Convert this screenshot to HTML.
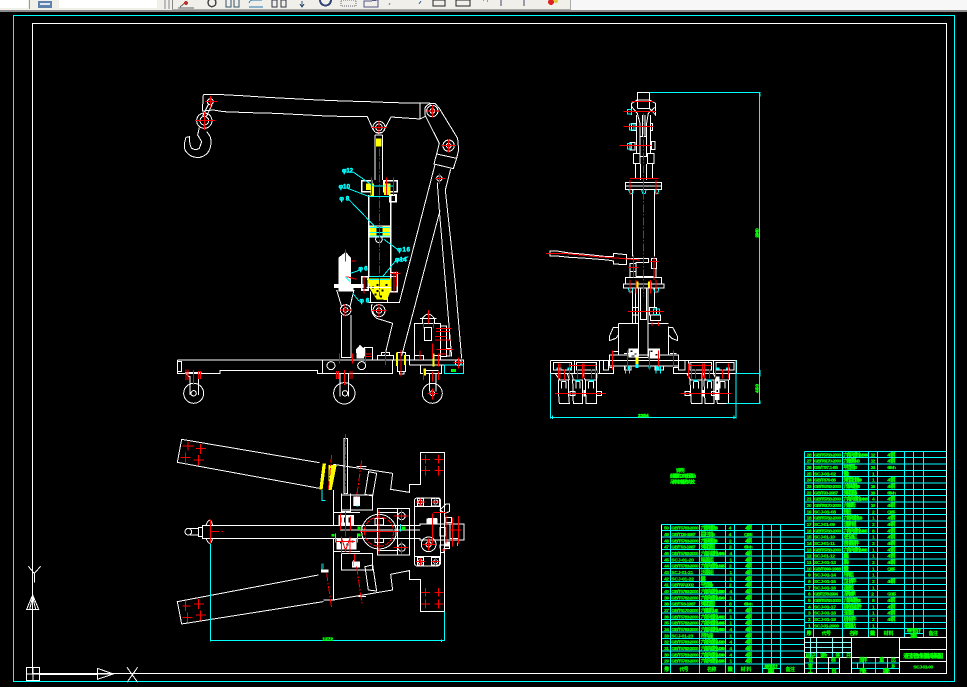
<!DOCTYPE html>
<html><head><meta charset="utf-8"><style>
html,body{margin:0;padding:0;background:#000;width:967px;height:687px;overflow:hidden}
svg{display:block;position:absolute;left:0;top:0}
svg *{shape-rendering:crispEdges}
.k{fill:none;stroke-width:3}
.w{stroke:#fff}.c{stroke:#0ff}.r{stroke:#f00}.y{stroke:#ff0}
.wf{fill:#fff;stroke:none}.yf{fill:#ff0;stroke:none}.cf{fill:#0ff;stroke:none}.gf{fill:#0f0;stroke:none}.rf{fill:#f00;stroke:none}
.d{stroke-dasharray:24 5 5 5}
text{font-family:"Liberation Sans","Noto Sans CJK SC",sans-serif;font-weight:bold;fill:#0f0;stroke:#0f0;stroke-width:.6;font-size:15px}
text.cy{fill:#0ff;stroke:#0ff;stroke-width:1.5;font-size:19px}
</style></head><body>
<svg width="967" height="687" viewBox="0 0 967 687" xmlns="http://www.w3.org/2000/svg">
<rect width="967" height="687" fill="#000"/>
<!-- toolbar -->
<rect width="967" height="10" fill="#f0efe9"/>
<rect y="10" width="967" height="2" fill="#8a8a8a"/>
<rect x="0" y="0" width="28" height="8" fill="#fff"/>
<rect x="29" y="0" width="1" height="9" fill="#999"/>
<rect x="38" y="1" width="14" height="7" fill="#5f82ad"/>
<rect x="40" y="3" width="10" height="2" fill="#dfe8f2"/>
<rect x="59" y="0" width="98" height="8" fill="#fff"/>
<rect x="164" y="0" width="2" height="9" fill="#bbb"/><rect x="168" y="0" width="2" height="9" fill="#bbb"/>
<rect x="172" y="0" width="1" height="9" fill="#888"/>
<rect x="172" y="9" width="398" height="1" fill="#aaa"/>
<rect x="570" y="0" width="1" height="10" fill="#aaa"/>
<rect x="571" y="0" width="396" height="10" fill="#f7f7f7"/>
<g fill="none" stroke="#555">
<path d="M180 7l6-5M178 8h16" stroke="#666"/><circle cx="186" cy="3" r="2" fill="#b33" stroke="none"/>
<path d="M209 0a4 4 0 1 0 6 0" stroke="#444" stroke-width="1.500"/>
<path d="M226 0v7h5V0M234 0v7h5V0" stroke="#356"/>
<path d="M249 3a4 4 0 0 1 4-3h9M249 7h14" stroke="#27a"/>
<rect x="272" y="0" width="5" height="7" stroke="#334"/><rect x="281" y="0" width="5" height="7" stroke="#334"/>
<path d="M302 1v5m-2-2l2 3 2-3" stroke="#357"/>
<path d="M320 0a5.500 5.500 0 0 0 11 0" stroke="#347" stroke-width="2"/>
<rect x="341" y="0" width="15" height="6" stroke="#667" stroke-dasharray="1 1"/>
<path d="M364 7V1h6l8-1v7z" stroke="#558"/>
<path d="M390 3l-1 2M421 1l-2 3" stroke="#47a"/>
<rect x="433" y="0" width="12" height="6" stroke="#222"/><rect x="456" y="0" width="14" height="6" stroke="#222"/>
<path d="M483 0h1m3 1h1M501 0v6M524 0v6" stroke="#446"/>
</g>
<circle cx="551" cy="2" r="3" fill="#d22"/><circle cx="556" cy="1" r="2" fill="#dc3"/>

<!-- frames -->
<path d="M13.500 15.500H954.500V681.500H13.500Z" fill="none" stroke="#0ff"/>
<path d="M32.500 23.500H946.500V673.500H32.500Z" fill="none" stroke="#fff"/>

<!-- UCS icon -->
<g transform="translate(0 550) scale(.3333)" class="k w">
<path d="M85 49L103 70L122 49M103 70V97"/>
<path d="M80 178H116L98 135ZM89 178L98 140M107 178L98 140"/>
<path d="M79 352H119V392H79ZM79 372H119M99 352V392"/>
<path d="M119 372H292" stroke-width="5"/>
<path d="M292 355L340 372L292 388ZM292 372H340" />
<path d="M381 352L413 397M413 352L381 397"/>
</g>

<!-- SIDE VIEW -->
<g transform="translate(160 80) scale(.3333)" class="k">
<g class="w">
<path d="M130 43L168 43L245 47L320 52L398 56L475 60L550 63L625 65L700 68L825 70M780 68V117L693 111L672 150M780 117L798 108"/>
<path d="M130 43L127 93L160 90L190 95L268 98L345 100L423 104L500 108L580 110L622 110L640 150"/>
<circle cx="151" cy="65" r="9"/><path d="M146 72L128 108M156 74L140 108"/>
<circle cx="133" cy="122" r="23"/><circle cx="133" cy="122" r="13"/>
<path d="M118 142L113 165L125 185L118 205Q108 212 95 205Q88 195 88 170L78 172Q70 195 75 210Q90 235 120 232Q150 225 153 190Q155 170 140 155"/>
<circle cx="657" cy="142" r="18"/><circle cx="657" cy="142" r="10"/>
<path d="M795 85Q800 70 825 70L838 85L893 175L896 210L890 235L830 222L838 190L795 105Z"/>
<circle cx="817" cy="93" r="17"/><circle cx="817" cy="93" r="7"/><circle cx="866" cy="197" r="17"/><circle cx="866" cy="197" r="7"/>
<path d="M830 222L822 252L880 266L890 235"/>
<path d="M825 254L718 668H625"/>
<path d="M872 268L856 330L885 600L905 835"/>
<path d="M832 308L838 390L875 830"/>
<path d="M840 392L725 828"/>
<circle cx="838" cy="295" r="8"/>
<path d="M645 165V300M668 165V300M645 165H668M648 158H665" />
<path d="M626 345V590M692 345V590" stroke-width="5"/>
<path d="M605 302H635V335H605ZM672 302H712V335H672ZM690 345H708V365H690Z" stroke-width="5"/>
<path d="M628 438H690V470H628Z" stroke-width="4"/>
<circle cx="657" cy="478" r="10"/>
<path d="M605 590H625V630H605ZM692 578H712V635H692Z" stroke-width="5"/>
<path d="M632 635V668M683 635V668"/>
<path d="M636 672Q630 700 650 715L698 730L675 825"/>
<circle cx="657" cy="692" r="18"/><circle cx="657" cy="692" r="8"/>
<path d="M530 630L545 680M582 630L570 680"/>
<circle cx="557" cy="690" r="16"/><circle cx="557" cy="690" r="7"/>
<path d="M545 705V832H573V705"/>
<path d="M52 840H910V880H853V855H748M52 840V880H180V871H472V880H697V840M487 840V880M52 845H65V875H52"/>
<circle cx="513" cy="857" r="12"/><circle cx="605" cy="857" r="12"/>
<path d="M613 830V802H638V840M652 840V826H700V840M665 826V818H688V826"/>
<path d="M712 818H737V875H712ZM718 875V882H732V875M737 826H748V855"/>
<path d="M763 840V730H842V840M793 742H815V782H793ZM763 826H790V840M820 826H842V840"/>
<path d="M787 730V715Q805 690 823 715V730M780 716H830"/>
<path d="M842 738H860V830H842ZM860 745H868V780H860ZM860 805H870V828H860Z"/>
<path d="M782 855H845V880H782ZM790 872H835"/>
<circle cx="895" cy="848" r="9"/>
<path d="M75 878Q85 890 90 890V945M115 890V945M75 878H125"/>
<circle cx="101" cy="940" r="30"/><circle cx="101" cy="940" r="8"/>
<path d="M540 880V950M566 880V950M520 880H590"/>
<circle cx="553" cy="940" r="32"/><circle cx="555" cy="940" r="8"/>
<path d="M808 880V935M828 880V935M790 880H845"/>
<circle cx="817" cy="940" r="30"/><circle cx="817" cy="940" r="7"/>
</g>
<path class="wf" d="M535 533L557 516L573 533V612H535ZM522 612H610V624H522ZM535 624H580V634H535Z"/>
<path class="wf" d="M588 808L600 795L612 805V835H590Z"/>
<g class="yf">
<path d="M618 310H642V350H632V330H618ZM672 310H692V345H672ZM630 440H650V470H630ZM668 440H690V470H668Z"/>
<path d="M648 175H665V200H648Z"/>
<path d="M620 595H695V622L682 660L650 658L632 630Z"/>
<rect x="708" y="818" width="6" height="40"/><rect x="732" y="825" width="6" height="30"/><rect x="818" y="820" width="5" height="40"/><rect x="790" y="866" width="8" height="20"/>
</g>
<g fill="#000" stroke="none"><path d="M636 620h6v6h-6zM650 612h6v6h-6zM664 628h6v6h-6zM644 640h6v6h-6zM660 646h6v6h-6zM676 612h6v6h-6zM650 630h6v6h-6z"/></g>
<path class="k w" d="M605 590H712M620 622H695"/>
<g class="c">
<path d="M578 275L640 318H700M563 325L628 350H690M568 360L650 445M628 442H690M628 458H690M628 468H690M672 478L715 510M745 530L705 545L668 590M628 590H690M628 598H690M572 580L600 570M570 605L555 590M578 640L597 663M853 855H910V880H853Z"/>
</g>
<text class="cy" x="546" y="277" textLength="33">φ12</text><text class="cy" x="536" y="326" textLength="34">φ10</text><text class="cy" x="538" y="361" textLength="30">φ8</text><text class="cy" x="712" y="514" textLength="38">φ16</text><text class="cy" x="705" y="544" textLength="35">φ14</text><text class="cy" x="595" y="572" textLength="28">φ6</text><text class="cy" x="598" y="667" textLength="30">φ6</text>
<rect class="gf" x="873" y="867" width="15" height="9"/>
<g class="r">
<path d="M133 96V150M105 122H165M151 48V82M135 65H172M657 122V160M636 142H680M817 75V112M797 93H840M866 178V218M845 197H888M825 295H855M838 280V312"/>
<path class="d" d="M659 205V650"/>
<path d="M634 292V345M680 292V345M700 292V345M556 508V545M575 543H588M560 590L590 598M612 590V640M702 575V635M692 580H722M710 575V620M555 672V710M540 690H575M657 672V712M636 692H680"/>
<path d="M538 820V850M578 820V850M616 805V850M616 822H634M616 830H634M676 815V855M723 810V890"/>
<path d="M805 690V730M791 727V745M820 727V745M828 745H875M828 755H870M825 770H860M825 780H875M830 808H880M835 822H860M780 812V840M818 790V835M835 822V860M895 832V865M880 848H910"/>
<path d="M78 868V900M84 868V900M100 870V915M115 873V897M122 873V897M530 873V897M536 873V897M553 870V915M570 873V897M576 873V897M790 875V900M817 875V905M835 875V900M817 925V958M803 940H832"/>
</g>
</g>

<!-- FRONT VIEW -->
<g transform="translate(530 80) scale(.3333)" class="k">
<g class="w">
<path d="M322 85V37H358V85M322 85H358"/>
<path d="M305 105V70L322 60H358L377 70V105L358 85M305 80L322 100L330 130V170M377 80L355 100L350 130V170"/>
<path d="M320 105V220M362 105V220M337 105V170H345V105M330 230H350V170H330Z"/>
<path d="M305 130H318V152H305ZM362 130H368V152H362ZM300 188H315V210H300ZM365 185H375V208H365Z"/>
<path d="M310 220H330V250H310ZM352 220H372V250H352ZM316 252V296M332 252V300M350 252V300M368 252V296"/>
<path d="M286 307H395V329H286ZM286 318H395"/>
<path d="M307 329V530M374 329V530"/>
<path d="M300 295H380"/>
<path d="M60 513H80L118 519L155 522L195 526L232 530H250V520L290 524V554L250 552V543L232 540L195 537L155 534L118 532L80 528H60Z"/>
<path d="M290 535H355V548H318V590M355 548V535M365 535H380V565H365ZM300 550H318V575H300Z"/>
<path d="M280 612H402V624H280ZM286 592H395V612H286ZM300 575V592M378 565V592M318 590H372"/>
<path d="M307 624V730M326 624V830M354 624V830M374 624V682M316 624V730M331 624V718H350V624"/>
<path d="M308 682H326V705H308ZM358 682H380V705H358ZM362 705H392V722H362Z"/>
<path d="M265 730V825H326M415 740V825H354M265 730H326M354 730H415"/>
<path d="M265 742H250L238 770V782L258 775L265 765M415 742H428L443 770V782L425 775L415 765"/>
<path d="M238 825H446V858H238ZM250 815H265M282 820H300M370 815H390M420 820H440M326 832H354"/>
<path d="M61 841H620V880H430V862H446M61 841V880H250V862H238M134 841V880M208 841V880M475 841V880M550 841V880"/>
<path d="M70 848H125V870H70ZM140 848H200V870H140ZM480 848H545V870H480ZM558 848H612V870H558Z"/>
<path d="M220 842H235V870H220ZM445 842H465V870H445Z"/>
<path d="M283 858H303V870H283ZM375 858H400V870H375Z"/>
<path d="M85 900H115V935L118 970H88L85 935ZM128 900H158V970H130ZM166 900H200V970H168ZM480 900H516V970H484ZM522 900H552V970H525ZM558 900H596V970H562Z"/>
<path d="M95 905H108M138 905H150M176 905H190M490 905H506M532 905H545M570 905H585M95 905V925M108 905V925M138 905V925M150 905V925M176 905V925M190 905V925M490 905V925M506 905V925M532 905V925M545 905V925M570 905V925M585 905V925"/>
<path d="M75 880L90 900M112 880L118 900M125 880L130 900M158 880L165 900M200 880V900M470 880L482 900M516 880V900M520 880L526 900M550 880L560 900M598 880V900"/>
<path d="M120 935H135V947H120ZM200 935H215V947H200ZM465 935H480V947H465ZM545 935H558V947H545Z"/>
</g>
<path class="wf" d="M296 805H326V832H296ZM356 805H390V836H356ZM160 930H167V950H160ZM516 930H522V950H516ZM555 890H568V960H555Z"/>
<g fill="#000" stroke="none"><path d="M302 812h6v4h-6zM314 820h6v4h-6zM362 812h6v4h-6zM376 822h6v4h-6zM304 826h10v3h-10zM560 905h4v6h-4zM560 930h4v6h-4z"/></g>
<g class="yf"><rect x="316" y="605" width="10" height="18"/><rect x="354" y="605" width="10" height="18"/><rect x="316" y="832" width="10" height="26"/></g>
<g class="c">
<path d="M358 37H692M688 37V970M618 880H692M590 970H692M618 840V1015M61 880V1015M61 1012H618M690 40V50M690 870V890M690 962V970M68 1006V1017M612 1006V1017"/>
<path d="M292 88H305V102H292ZM298 132H312V150H298ZM292 190H305V207H292ZM370 687H388V703H370Z"/>
<path d="M296 330L300 340H308L310 330M335 330L338 340H346L348 330M374 330L377 340H384L386 330M295 625L298 636H306L308 625M370 625L375 636H384L386 625"/>
<path d="M286 858V880M298 858V880M378 858V880M392 858V880"/>
</g>
<path class="cf" d="M292 858h8v12h-8zM380 858h8v12h-8zM316 852h10v12h-10zM356 858h6v8h-6zM80 862h14v6H80zM112 862h14v6h-14zM556 862h12v6h-12zM588 862h12v6h-12zM135 898h14v6h-14zM178 898h14v6h-14zM490 898h12v6h-12zM532 898h12v6h-12z"/>
<g class="r">
<path d="M305 65H370M280 94H378M280 139H370M268 196H365M300 295H386"/>
<path class="d" d="M340 100V650"/>
<path d="M48 520H100L140 524L200 530L270 535L330 540M300 300V345M340 300V345M378 300V345M310 525V592M296 562H325M372 532V600M360 545H385M300 600V640M318 600V640M362 600V640M378 600V640M294 694H402M366 725V738M385 725V738M248 812V870M292 812V870M358 812V870M385 812V860M430 812V860"/>
<path d="M85 850V896M90 850V896M103 868V900M118 850V896M142 868V896M157 850V896M162 850V896M185 868V896M197 850V896M203 868V896M476 850V896M485 850V896M496 868V896M518 850V896M524 850V896M538 868V896M556 850V896M577 868V896M595 850V896M120 856H200M480 856H545M75 940H228M452 940H605"/>
</g>
<text x="0" y="0" transform="translate(686 473) rotate(-90)" textLength="28" style="stroke-width:1.500">2940</text>
<text x="0" y="0" transform="translate(686 939) rotate(-90)" textLength="27" style="stroke-width:1.500">450</text>
<text x="324" y="1011" textLength="32" style="stroke-width:1.500">2254</text>
</g>

<!-- PLAN VIEW -->
<g transform="translate(160 430) scale(.3333)" class="k">
<g class="w">
<path d="M65 28L52 97L478 175M65 28L478 98M520 103L698 130L692 178L748 187V163H781V67H853V545H781V448H748V422L692 433L698 480L520 510"/>
<path d="M65 582L52 515L475 435M65 582L490 515"/>
<path d="M626 125L615 193L638 198L650 130ZM615 410L625 480L650 483L638 405Z"/>
<path d="M552 25H562V190H552ZM520 180V285M520 325V510M545 190V245H572V190M545 195H638V240H545M545 370H638V420H545ZM522 248H600M522 365H600"/>
<path d="M127 286H780V282H912V330H780V325H127ZM127 286V325M540 300H780"/>
<path d="M127 292H115V320H127ZM115 295H90M115 315H90"/>
<circle cx="85" cy="305" r="10"/>
<path d="M138 286Q150 255 158 286M138 325Q150 355 158 325"/>
<circle cx="657" cy="305" r="52"/>
<path d="M652 235H748V375H652ZM712 235V375M652 248H712M652 362H712"/>
<path d="M645 265H670V285H645ZM645 325H670V338H645Z"/>
<circle cx="725" cy="258" r="11"/><circle cx="725" cy="353" r="11"/>
<path d="M763 215Q763 204 772 204H835Q842 204 842 215V395Q842 408 832 408H772Q763 408 763 395Z"/>
<path d="M763 230H842M763 380H842"/>
<path d="M772 205H790V228H772ZM815 205H838V228H815ZM772 382H790V405H772ZM815 382H838V405H815Z"/>
<circle cx="781" cy="216" r="6"/><circle cx="827" cy="216" r="6"/><circle cx="781" cy="395" r="6"/><circle cx="827" cy="395" r="6"/>
<path d="M840 292H855V318H840ZM805 265H830V280H805ZM855 262H875V278H855ZM870 282H895V326H870ZM840 240L858 222H868V245L855 250ZM840 345H868V355H852V368H842Z"/>
<circle cx="806" cy="343" r="22"/><circle cx="806" cy="343" r="8"/>
<path d="M590 110H620M490 510H525M596 500H618"/>
</g>
<path class="wf" d="M535 255H582V285H535ZM530 325H590V358H530ZM580 200H600V228H580ZM576 395H600V412H576ZM483 418H505V428H483ZM800 265H832V280H800ZM855 335H870V350H855Z"/>
<g fill="#000" stroke="none"><path d="M540 262h4v16h-4zM552 262h4v16h-4zM566 262h4v16h-4zM540 335h6v6h-6zM560 340h6v6h-6zM575 332h6v6h-6z"/></g>
<path class="yf" d="M488 100H498L488 178H478ZM505 105H530L515 180H505ZM515 105H522L512 175H508Z"/>
<g class="r">
<path d="M68 48H100M84 34V62M108 55H138M122 42V72M62 83H92M77 68V98M100 90H132M116 75V105"/>
<path d="M68 528H92M77 513V543M102 522H132M116 507V537M68 562H98M82 548V578M108 555H138M122 541V571"/>
<path d="M783 88H810M796 75V100M823 88H850M836 75V100M783 122H810M796 108V136M823 122H850M836 108V136"/>
<path d="M783 487H810M796 474V500M823 487H850M836 474V500M783 522H810M796 508V536M823 522H850M836 508V536"/>
<path class="d" d="M556 12V190M515 75L505 180M605 92L590 200M500 430L515 535M590 410L606 520M155 305H190"/>
<path d="M151 268V340M490 400V415M584 372V395M541 250V300M556 245V320M572 260V302M545 320V370M570 320V370"/>
<path d="M657 240V370M600 305H715M700 258H745M725 240V275M700 353H745M725 335V372"/>
<circle cx="657" cy="305" r="44" stroke-dasharray="14 4"/>
<path d="M768 216H795M781 206V226M815 216H838M827 206V226M768 395H795M781 384V406M815 395H838M827 384V406"/>
<path d="M818 250V340M858 255V340M878 262V350M895 258V340M820 247H860M870 300H905M845 360H860M788 343H825M806 325V362"/>
<path d="M545 325L558 365M570 325L555 365M530 335H585"/>
</g>
<g class="c">
<path d="M151 340V632H853V545M151 625V635M845 628V636M526 310V338M592 310V338M605 285V305M722 282V305M486 180V212H496M580 200V228M590 228H596M486 400V418M580 390V408M893 338V348"/>
</g>
<path class="gf" d="M592 290h10v10h-10zM726 290h10v10h-10zM514 312h10v8h-10zM592 310h10v10h-10z"/>
<text x="487" y="631" textLength="32" style="stroke-width:1.500">1272</text>
</g>

<!-- TABLES -->
<g transform="translate(650 440) scale(.3333)">
<g class="k c">
<path d="M463 34H889M463 53H889M463 72H889M463 91H889M463 110H889M463 129H889M463 148H889M463 167H889M463 186H889M463 205H889M463 224H889M463 243H889M463 262H889M463 281H889M463 300H889M463 319H889M463 338H889M463 357H889M463 376H889M463 395H889M463 414H889M463 433H889M463 452H889M463 471H889M463 490H889M463 509H889M463 528H889M463 547H889M463 566H889"/>
<path d="M463 34V592M490 34V592M577 34V592M656 34V592M683 34V592M763 34V592M790 34V592M820 34V592M765 580H820"/>
<path d="M34 253H463M34 272H463M34 291H463M34 310H463M34 329H463M34 348H463M34 367H463M34 386H463M34 405H463M34 424H463M34 443H463M34 462H463M34 481H463M34 500H463M34 519H463M34 538H463M34 557H463M34 576H463M34 595H463M34 614H463M34 633H463M34 652H463M34 672H463"/>
<path d="M61 253V700M148 253V700M227 253V700M254 253V700M337 253V700M364 253V700M391 253V700M337 686H391"/>
<path d="M463 608H605M463 623H605M463 638H605M463 669H568M463 685H568M605 669H748M605 685H748M481 592V653M499 592V653M547 592V653M578 592V653M623 669V685M640 652V700M677 652V700M712 652V700"/>
</g>
<g class="k w">
<path d="M0 700H889M34 253V700M463 592V700M463 592H889M605 592V700M748 592V700M748 628H889M748 664H889M605 652H748M463 653H605M499 653V700M535 653V700M568 653V700"/>
<path d="M481 592V640M499 592V640M547 592V640M578 592V640M463 608H605M463 623H605M463 638H605" stroke-width="2"/>
</g>
<!-- right table rows -->
<text x="470" y="49" textLength="15">28</text><text x="492" y="49" textLength="82">GB/T5783-2000</text><text x="580" y="49" textLength="75">六角头螺栓M10×30</text><text x="662" y="49" textLength="14">12</text><text x="712" y="49" textLength="24">45钢</text>
<text x="470" y="68" textLength="15">27</text><text x="492" y="68" textLength="82">GB/T6170-2000</text><text x="580" y="68" textLength="50">六角螺母M10</text><text x="662" y="68" textLength="14">12</text><text x="712" y="68" textLength="24">45钢</text>
<text x="470" y="87" textLength="15">26</text><text x="492" y="87" textLength="72">GB/T97.1-85</text><text x="580" y="87" textLength="42">平垫圈10</text><text x="662" y="87" textLength="14">24</text><text x="712" y="87" textLength="26">65Mn</text>
<text x="470" y="106" textLength="15">25</text><text x="492" y="106" textLength="66">SCJ-01-02</text><text x="580" y="106" textLength="17">销轴</text><text x="666" y="106" textLength="6">1</text>
<text x="470" y="125" textLength="15">24</text><text x="492" y="125" textLength="66">GB/T879-86</text><text x="580" y="125" textLength="56">弹性圆柱销8×40</text><text x="666" y="125" textLength="6">1</text><text x="712" y="125" textLength="24">45钢</text>
<text x="470" y="144" textLength="15">23</text><text x="492" y="144" textLength="82">GB/T5782-2000</text><text x="580" y="144" textLength="50">六角头螺栓M8</text><text x="662" y="144" textLength="14">16</text><text x="712" y="144" textLength="24">45钢</text>
<text x="470" y="163" textLength="15">22</text><text x="492" y="163" textLength="72">GB/T93-1987</text><text x="580" y="163" textLength="42">弹簧垫圈8</text><text x="662" y="163" textLength="14">16</text><text x="712" y="163" textLength="26">65Mn</text>
<text x="470" y="182" textLength="15">21</text><text x="492" y="182" textLength="82">GB/T5783-2000</text><text x="580" y="182" textLength="75">六角头螺栓M6×20</text><text x="666" y="182" textLength="6">4</text><text x="712" y="182" textLength="24">45钢</text>
<text x="470" y="201" textLength="15">20</text><text x="492" y="201" textLength="82">GB/T6170-2000</text><text x="580" y="201" textLength="38">六角螺母</text><text x="662" y="201" textLength="14">10</text><text x="712" y="201" textLength="24">45钢</text>
<text x="470" y="220" textLength="15">19</text><text x="492" y="220" textLength="66">SCJ-01-08</text><text x="580" y="220" textLength="24">挡板</text><text x="666" y="220" textLength="8">2</text><text x="712" y="220" textLength="24">Q235</text>
<text x="470" y="239" textLength="15">18</text><text x="492" y="239" textLength="82">GB/T5782-2000</text><text x="580" y="239" textLength="58">六角头螺栓M16</text><text x="666" y="239" textLength="6">1</text><text x="712" y="239" textLength="24">45钢</text>
<text x="470" y="258" textLength="15">17</text><text x="492" y="258" textLength="63">SCJ-01-09</text><text x="580" y="258" textLength="40">活塞杆组</text><text x="666" y="258" textLength="6">2</text><text x="712" y="258" textLength="24">45钢</text>
<text x="470" y="277" textLength="15">16</text><text x="492" y="277" textLength="82">GB/T5783-2000</text><text x="580" y="277" textLength="73">六角头螺栓M8×25</text><text x="666" y="277" textLength="8">8</text><text x="712" y="277" textLength="24">45钢</text>
<text x="470" y="296" textLength="15">15</text><text x="492" y="296" textLength="63">SCJ-01-10</text><text x="580" y="296" textLength="42">液压油缸</text><text x="666" y="296" textLength="6">1</text><text x="712" y="296" textLength="24">45钢</text>
<text x="470" y="315" textLength="15">14</text><text x="492" y="315" textLength="63">SCJ-01-11</text><text x="580" y="315" textLength="48">密封圈组件</text><text x="666" y="315" textLength="6">2</text><text x="712" y="315" textLength="24">45钢</text>
<text x="470" y="334" textLength="15">13</text><text x="492" y="334" textLength="82">GB/T5783-2000</text><text x="580" y="334" textLength="73">六角头螺栓M6×16</text><text x="666" y="334" textLength="6">1</text><text x="712" y="334" textLength="24">45钢</text>
<text x="470" y="353" textLength="15">12</text><text x="492" y="353" textLength="63">SCJ-01-12</text><text x="580" y="353" textLength="17">底座</text><text x="666" y="353" textLength="6">1</text><text x="712" y="353" textLength="24">45钢</text>
<text x="470" y="372" textLength="15">11</text><text x="492" y="372" textLength="66">SCJ-01-13</text><text x="580" y="372" textLength="17">吊钩</text><text x="666" y="372" textLength="6">2</text><text x="712" y="372" textLength="24">45钢</text>
<text x="470" y="391" textLength="15">10</text><text x="492" y="391" textLength="82">GB/T899-1988</text><text x="580" y="391" textLength="17">螺柱</text><text x="666" y="391" textLength="6">1</text><text x="712" y="391" textLength="24">Q235</text>
<text x="474" y="410" textLength="7">9</text><text x="492" y="410" textLength="66">SCJ-01-14</text><text x="580" y="410" textLength="32">吊臂组</text><text x="666" y="410" textLength="6">1</text>
<text x="474" y="429" textLength="7">8</text><text x="492" y="429" textLength="66">SCJ-01-15</text><text x="580" y="429" textLength="40">立柱焊件</text><text x="666" y="429" textLength="6">2</text><text x="712" y="429" textLength="24">45钢</text>
<text x="474" y="448" textLength="7">7</text><text x="492" y="448" textLength="66">SCJ-01-16</text><text x="580" y="448" textLength="32">连接板</text><text x="666" y="448" textLength="6">1</text>
<text x="474" y="467" textLength="7">6</text><text x="492" y="467" textLength="72">GB/T276-1994</text><text x="580" y="467" textLength="38">深沟轴承</text><text x="664" y="467" textLength="8">2</text><text x="712" y="467" textLength="26">GCr15</text>
<text x="474" y="486" textLength="7">5</text><text x="492" y="486" textLength="82">GB/T5783-2000</text><text x="580" y="486" textLength="53">六角头螺栓M12</text><text x="666" y="486" textLength="8">8</text><text x="712" y="486" textLength="24">45钢</text>
<text x="474" y="505" textLength="7">4</text><text x="492" y="505" textLength="66">SCJ-01-17</text><text x="580" y="505" textLength="56">前轮支架组件</text><text x="666" y="505" textLength="6">1</text><text x="712" y="505" textLength="24">45钢</text>
<text x="474" y="524" textLength="7">3</text><text x="492" y="524" textLength="66">SCJ-01-18</text><text x="580" y="524" textLength="32">支撑腿</text><text x="666" y="524" textLength="6">1</text><text x="712" y="524" textLength="24">45钢</text>
<text x="474" y="543" textLength="7">2</text><text x="492" y="543" textLength="66">SCJ-01-19</text><text x="580" y="543" textLength="40">后轮组件</text><text x="666" y="543" textLength="8">2</text><text x="712" y="543" textLength="24">45钢</text>
<text x="474" y="562" textLength="7">1</text><text x="492" y="562" textLength="75">SCJ-01-2000</text><text x="580" y="562" textLength="38">液压泵站</text><text x="666" y="562" textLength="6">1</text>
<text x="469" y="585" textLength="14">序号</text><text x="515" y="585" textLength="28">代 号</text><text x="598" y="585" textLength="26">名 称</text><text x="660" y="585" textLength="16">数量</text><text x="701" y="585" textLength="30">材 料</text><text x="770" y="578" textLength="44">单件总计</text><text x="780" y="592" textLength="22">重量</text><text x="836" y="585" textLength="28">备 注</text>
<!-- left table rows -->
<text x="42" y="269" textLength="15">50</text><text x="64" y="269" textLength="82">GB/T5783-2000</text><text x="152" y="269" textLength="52">六角头螺栓M8</text><text x="236" y="269" textLength="10">4</text><text x="285" y="269" textLength="21">45钢</text>
<text x="42" y="288" textLength="15">49</text><text x="64" y="288" textLength="73">GB/T119-1987</text><text x="152" y="288" textLength="43">圆柱销6</text><text x="236" y="288" textLength="10">4</text><text x="282" y="288" textLength="26">Q235</text>
<text x="42" y="307" textLength="15">48</text><text x="64" y="307" textLength="82">GB/T5783-2000</text><text x="152" y="307" textLength="51">六角头螺栓M6</text><text x="237" y="307" textLength="8">2</text><text x="285" y="307" textLength="21">45钢</text>
<text x="42" y="326" textLength="15">47</text><text x="64" y="326" textLength="73">GB/T93-1987</text><text x="152" y="326" textLength="43">弹簧垫圈</text><text x="237" y="326" textLength="8">2</text><text x="282" y="326" textLength="26">65Mn</text>
<text x="42" y="345" textLength="15">46</text><text x="64" y="345" textLength="82">GB/T5782-2000</text><text x="152" y="345" textLength="73">六角头螺栓M8×45</text><text x="238" y="345" textLength="8">4</text><text x="285" y="345" textLength="21">45钢</text>
<text x="42" y="364" textLength="15">45</text><text x="64" y="364" textLength="68">SCJ-01-20</text><text x="152" y="364" textLength="40">端盖组</text><text x="238" y="364" textLength="6">1</text><text x="285" y="364" textLength="21">45钢</text>
<text x="42" y="383" textLength="15">44</text><text x="64" y="383" textLength="82">GB/T5783-2000</text><text x="152" y="383" textLength="73">六角头螺栓M10×25</text><text x="237" y="383" textLength="8">2</text><text x="285" y="383" textLength="21">45钢</text>
<text x="42" y="402" textLength="15">43</text><text x="64" y="402" textLength="66">SCJ-01-21</text><text x="152" y="402" textLength="40">活塞组</text><text x="238" y="402" textLength="6">1</text><text x="285" y="402" textLength="21">45钢</text>
<text x="42" y="421" textLength="15">42</text><text x="64" y="421" textLength="68">SCJ-01-22</text><text x="152" y="421" textLength="16">缸体</text><text x="238" y="421" textLength="6">1</text><text x="285" y="421" textLength="21">45钢</text>
<text x="42" y="440" textLength="15">41</text><text x="64" y="440" textLength="68">GB/T97-2002</text><text x="152" y="440" textLength="38">平垫圈8</text><text x="237" y="440" textLength="8">2</text><text x="285" y="440" textLength="21">45钢</text>
<text x="42" y="459" textLength="15">40</text><text x="64" y="459" textLength="82">GB/T5783-2000</text><text x="152" y="459" textLength="73">六角头螺栓M12×30</text><text x="238" y="459" textLength="8">4</text><text x="285" y="459" textLength="21">45钢</text>
<text x="42" y="478" textLength="15">39</text><text x="64" y="478" textLength="82">GB/T5782-2000</text><text x="152" y="478" textLength="73">六角头螺栓M12×40</text><text x="238" y="478" textLength="6">1</text><text x="285" y="478" textLength="21">45钢</text>
<text x="42" y="497" textLength="15">38</text><text x="64" y="497" textLength="73">GB/T93-1987</text><text x="152" y="497" textLength="43">弹簧垫圈</text><text x="237" y="497" textLength="10">8</text><text x="282" y="497" textLength="26">65Mn</text>
<text x="42" y="516" textLength="15">37</text><text x="64" y="516" textLength="82">GB/T6170-2000</text><text x="152" y="516" textLength="53">六角螺母M12</text><text x="237" y="516" textLength="10">8</text><text x="285" y="516" textLength="21">45钢</text>
<text x="42" y="535" textLength="15">36</text><text x="64" y="535" textLength="82">GB/T5783-2000</text><text x="152" y="535" textLength="73">六角头螺栓M6×12</text><text x="238" y="535" textLength="6">1</text><text x="285" y="535" textLength="21">45钢</text>
<text x="42" y="554" textLength="15">35</text><text x="64" y="554" textLength="82">GB/T5782-2000</text><text x="152" y="554" textLength="73">六角头螺栓M8×35</text><text x="238" y="554" textLength="6">1</text><text x="285" y="554" textLength="21">45钢</text>
<text x="42" y="573" textLength="15">34</text><text x="64" y="573" textLength="82">GB/T5783-2000</text><text x="152" y="573" textLength="73">六角头螺栓M8×30</text><text x="238" y="573" textLength="8">4</text><text x="285" y="573" textLength="21">45钢</text>
<text x="42" y="592" textLength="15">33</text><text x="64" y="592" textLength="66">SCJ-01-23</text><text x="152" y="592" textLength="38">吊钩座</text><text x="238" y="592" textLength="6">1</text><text x="285" y="592" textLength="21">45钢</text>
<text x="42" y="611" textLength="15">32</text><text x="64" y="611" textLength="82">GB/T5783-2000</text><text x="152" y="611" textLength="73">六角头螺栓M10×20</text><text x="238" y="611" textLength="8">4</text><text x="285" y="611" textLength="21">45钢</text>
<text x="42" y="630" textLength="15">31</text><text x="64" y="630" textLength="82">GB/T5782-2000</text><text x="152" y="630" textLength="73">六角头螺栓M10×50</text><text x="238" y="630" textLength="8">4</text><text x="285" y="630" textLength="21">45钢</text>
<text x="42" y="649" textLength="15">30</text><text x="64" y="649" textLength="82">GB/T5783-2000</text><text x="152" y="649" textLength="73">六角头螺栓M10×60</text><text x="238" y="649" textLength="8">4</text><text x="285" y="649" textLength="21">45钢</text>
<text x="42" y="668" textLength="15">29</text><text x="64" y="668" textLength="82">GB/T5783-2000</text><text x="152" y="668" textLength="73">六角头螺栓M12×35</text><text x="238" y="668" textLength="6">1</text><text x="285" y="668" textLength="21">45钢</text>
<text x="42" y="693" textLength="14">序号</text><text x="88" y="693" textLength="28">代 号</text><text x="171" y="693" textLength="28">名 称</text><text x="233" y="693" textLength="16">数量</text><text x="272" y="693" textLength="32">材 料</text><text x="342" y="685" textLength="42">单件总计</text><text x="352" y="698" textLength="22">重量</text><text x="407" y="693" textLength="28">备 注</text>
<!-- title block text -->
<text x="760" y="654" textLength="120" style="font-size:17px;stroke-width:1">液压折叠式起重机装配图</text>
<text x="790" y="686" textLength="60">SCJ-01-00</text>
<text x="467" y="652" textLength="30">标记</text><text x="510" y="652" textLength="22">更改</text><text x="556" y="652" textLength="16">签</text><text x="588" y="652" textLength="10">日</text>
<text x="475" y="664" textLength="12">设</text><text x="543" y="664" textLength="14">标</text><text x="474" y="684" textLength="12">审</text><text x="474" y="698" textLength="12">工</text><text x="545" y="698" textLength="12">批</text>
<text x="628" y="664" textLength="24">图样</text><text x="688" y="664" textLength="12">重</text><text x="723" y="664" textLength="12">比</text><text x="723" y="682" textLength="12">1:5</text><text x="628" y="698" textLength="22">共张</text><text x="698" y="698" textLength="22">第张</text>
<!-- notes -->
<text x="78" y="96" textLength="26" style="font-size:14px;stroke-width:.8">说明</text>
<text x="60" y="113" textLength="78" style="font-size:14px;stroke-width:.8">起重量为二吨液压驱动</text>
<text x="60" y="130" textLength="75" style="font-size:14px;stroke-width:.8">吊臂可折叠便于存放</text>
</g>
</svg>
</body></html>
